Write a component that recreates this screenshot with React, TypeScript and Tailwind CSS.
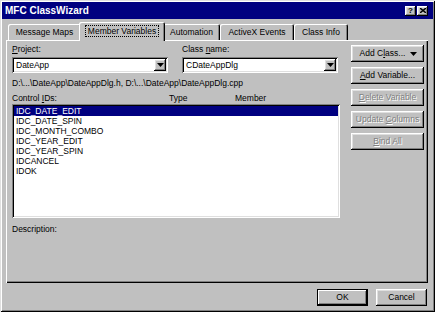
const raised =
  "bg-[#c0c0c0] shadow-[inset_-1px_-1px_0_#000,inset_1px_1px_0_#fff,inset_-2px_-2px_0_#808080,inset_2px_2px_0_#dfdfdf]";
const sunken =
  "bg-white shadow-[inset_1px_1px_0_#808080,inset_-1px_-1px_0_#fff,inset_2px_2px_0_#000,inset_-2px_-2px_0_#dfdfdf]";

function Arrow() {
  return (
    <svg width="7" height="4" viewBox="0 0 7 4">
      <path d="M0 0h7L3.5 4z" fill="#000" />
    </svg>
  );
}

function Combo({ value, w }: { value: string; w: string }) {
  return (
    <div className={`${sunken} ${w} h-[16px] flex items-center p-[2px]`}>
      <span className="flex-1 pl-[2px] leading-[12px]">{value}</span>
      <div className={`${raised} w-[12px] h-[12px] flex items-center justify-center`}>
        <Arrow />
      </div>
    </div>
  );
}

function Tab({ label, w, active }: { label: string; w: string; active?: boolean }) {
  if (active) {
    return (
      <div
        className={`${w} -mx-[2px] h-[19px] -mb-px relative z-10 bg-[#c0c0c0] rounded-t-[2px] flex items-center justify-center shadow-[inset_1px_1px_0_#fff,inset_-1px_0_0_#000,inset_-2px_0_0_#808080]`}
      >
        <span className="outline outline-1 outline-dotted outline-black px-[2px] leading-[10px] -mt-[2px]">
          {label}
        </span>
      </div>
    );
  }
  return (
    <div
      className={`${w} h-[16px] bg-[#c0c0c0] rounded-t-[2px] flex items-center justify-center shadow-[inset_1px_1px_0_#fff,inset_-1px_0_0_#000,inset_-2px_0_0_#808080]`}
    >
      {label}
    </div>
  );
}

function SideButton({ children, disabled }: { children: React.ReactNode; disabled?: boolean }) {
  return (
    <div
      className={`${raised} w-[73px] h-[17px] flex items-center justify-center ${
        disabled ? "text-[#808080] [text-shadow:1px_1px_0_#fff]" : ""
      }`}
    >
      {children}
    </div>
  );
}

const ids = [
  "IDC_DATE_EDIT",
  "IDC_DATE_SPIN",
  "IDC_MONTH_COMBO",
  "IDC_YEAR_EDIT",
  "IDC_YEAR_SPIN",
  "IDCANCEL",
  "IDOK",
];

export default function App() {
  return (
    <div className="w-[435px] h-[312px] bg-[#c0c0c0] p-[2px] flex flex-col font-['Liberation_Sans',Arial,sans-serif] text-[8.5px] text-black shadow-[inset_1px_1px_0_#dfdfdf,inset_-1px_-1px_0_#000,inset_2px_2px_0_#fff,inset_-2px_-2px_0_#808080]">
      {/* title bar */}
      <div className="h-[17px] bg-[#000080] flex items-center pl-[3px] pr-[5px]">
        <span className="flex-1 text-white font-bold text-[10px]">MFC ClassWizard</span>
        <div className="flex gap-[1px]">
          <div className={`${raised} w-[11px] h-[10px] flex items-center justify-center font-bold text-[8px] leading-none`}>
            ?
          </div>
          <div className={`${raised} w-[11px] h-[10px] flex items-center justify-center`}>
            <svg width="6" height="5" viewBox="0 0 6 5">
              <path d="M0 0L6 5M6 0L0 5" stroke="#000" strokeWidth="1.4" />
            </svg>
          </div>
        </div>
      </div>

      <div className="pl-[4px] pr-[5px] flex flex-col">
        {/* tabs */}
        <div className="flex items-end pl-[2px] mt-[3px] h-[18px]">
          <Tab label="Message Maps" w="w-[73px]" />
          <Tab label="Member Variables" w="w-[86px]" active />
          <Tab label="Automation" w="w-[57px]" />
          <Tab label="ActiveX Events" w="w-[74px]" />
          <Tab label="Class Info" w="w-[54px]" />
        </div>

        {/* panel */}
        <div className="h-[243px] flex pl-[6px] pt-[3px] shadow-[inset_1px_1px_0_#fff,inset_-1px_-1px_0_#000,inset_-2px_-2px_0_#808080]">
          <div className="w-[328px] flex flex-col">
            <div className="flex">
              <div className="w-[156px] flex flex-col">
                <div className="h-[12px] leading-[12px]">
                  <u>P</u>roject:
                </div>
                <div className="mt-[2px]">
                  <Combo value="DateApp" w="w-[156px]" />
                </div>
              </div>
              <div className="w-[156px] ml-[14px] flex flex-col">
                <div className="h-[12px] leading-[12px]">
                  Class <u>n</u>ame:
                </div>
                <div className="mt-[2px]">
                  <Combo value="CDateAppDlg" w="w-[156px]" />
                </div>
              </div>
            </div>
            <div className="mt-[4px] h-[12px] leading-[12px]">
              D:\...\DateApp\DateAppDlg.h, D:\...\DateApp\DateAppDlg.cpp
            </div>
            <div className="mt-[3px] h-[12px] leading-[12px] flex">
              <span className="w-[157px]">
                Control <u>I</u>Ds:
              </span>
              <span className="w-[66px]">Type</span>
              <span>Member</span>
            </div>
            <div className={`${sunken} h-[114px] p-[2px] flex flex-col`}>
              {ids.map((id, i) => (
                <div
                  key={id}
                  className={`h-[10px] leading-[10px] pl-[2px] ${i === 0 ? "bg-[#000080] text-white" : ""}`}
                >
                  {id}
                </div>
              ))}
            </div>
            <div className="mt-[5px] h-[12px] leading-[12px]">Description:</div>
          </div>

          <div className="ml-[11px] mt-[2px] flex flex-col gap-[5px]">
            <SideButton>
              <span className="flex items-center gap-[5px] pl-[2px]">
                <span>
                  Add C<u>l</u>ass...
                </span>
                <Arrow />
              </span>
            </SideButton>
            <SideButton>
              <span>
                <u>A</u>dd Variable...
              </span>
            </SideButton>
            <SideButton disabled>
              <span>
                <u>D</u>elete Variable
              </span>
            </SideButton>
            <SideButton disabled>
              <span>
                Update <u>C</u>olumns
              </span>
            </SideButton>
            <SideButton disabled>
              <span>
                <u>B</u>ind All
              </span>
            </SideButton>
          </div>
        </div>

        {/* dialog buttons */}
        <div className="flex justify-end gap-[8px] mt-[6px] pr-px">
          <div className="w-[51px] h-[17px] bg-[#c0c0c0] flex items-center justify-center shadow-[inset_0_0_0_1px_#000,inset_-2px_-2px_0_#000,inset_2px_2px_0_#fff,inset_-3px_-3px_0_#808080]">
            OK
          </div>
          <div className={`${raised} w-[51px] h-[17px] flex items-center justify-center`}>Cancel</div>
        </div>
      </div>
    </div>
  );
}
